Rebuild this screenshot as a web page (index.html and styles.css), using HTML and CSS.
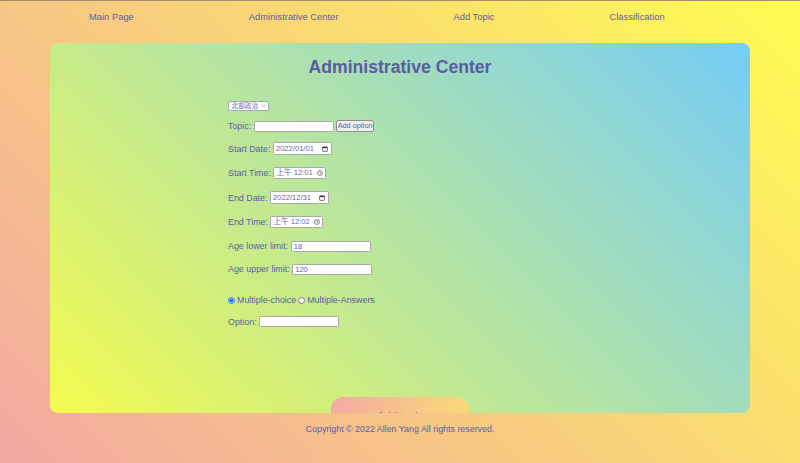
FILE: index.html
```html
<!DOCTYPE html>
<html lang="en">
<head>
<meta charset="utf-8">
<title>Administrative Center</title>
<link rel="stylesheet" href="styles.css">
</head>
<body>
<nav class="nav">
  <a class="nav__link" href="#">Main Page</a>
  <a class="nav__link" href="#">Administrative Center</a>
  <a class="nav__link" href="#">Add Topic</a>
  <a class="nav__link" href="#">Classification</a>
</nav>
<main class="card">
  <h1 class="title">Administrative Center</h1>
  <form class="form">
    <div class="row row--select">
      <span class="select">北部政治<svg class="chev" viewBox="0 0 6 4" width="5" height="3.5"><path d="M0.7 0.8 L3 3 L5.3 0.8" fill="none" stroke="#7a7a7a" stroke-width="0.8"/></svg></span>
    </div>
    <div class="row row--text">
      <span class="label">Topic:</span><input class="input" type="text"><button type="button" class="small-btn">Add option</button>
    </div>
    <div class="row row--date">
      <span class="label">Start Date:</span>
      <span class="field field--date"><span class="field__value">2022/01/01</span><svg class="icon" viewBox="0 0 10 10" width="6" height="6"><rect x="1" y="1.5" width="8" height="7.5" rx="0.8" fill="none" stroke="#333" stroke-width="1.1"/><rect x="1" y="1.5" width="8" height="2" fill="#333"/></svg></span>
    </div>
    <div class="row row--time">
      <span class="label">Start Time:</span>
      <span class="field field--time"><span class="field__value">上午 12:01</span><svg class="icon" viewBox="0 0 10 10" width="6" height="6"><circle cx="5" cy="5" r="4.1" fill="none" stroke="#333" stroke-width="1"/><path d="M5 2.6 V5 L6.8 6.4" fill="none" stroke="#333" stroke-width="1"/></svg></span>
    </div>
    <div class="row row--date">
      <span class="label">End Date:</span>
      <span class="field field--date"><span class="field__value">2022/12/31</span><svg class="icon" viewBox="0 0 10 10" width="6" height="6"><rect x="1" y="1.5" width="8" height="7.5" rx="0.8" fill="none" stroke="#333" stroke-width="1.1"/><rect x="1" y="1.5" width="8" height="2" fill="#333"/></svg></span>
    </div>
    <div class="row row--time">
      <span class="label">End Time:</span>
      <span class="field field--time"><span class="field__value">上午 12:02</span><svg class="icon" viewBox="0 0 10 10" width="6" height="6"><circle cx="5" cy="5" r="4.1" fill="none" stroke="#333" stroke-width="1"/><path d="M5 2.6 V5 L6.8 6.4" fill="none" stroke="#333" stroke-width="1"/></svg></span>
    </div>
    <div class="row row--age">
      <span class="label">Age lower limit:</span><input class="input" type="text" value="18">
    </div>
    <div class="row row--age">
      <span class="label">Age upper limit:</span><input class="input" type="text" value="120">
    </div>
    <div class="row row--radio">
      <input class="radio" type="radio" name="kind" id="k1" checked><label class="label" for="k1">Multiple-choice</label>
      <input class="radio radio--second" type="radio" name="kind" id="k2"><label class="label" for="k2">Multiple-Answers</label>
    </div>
    <div class="row row--option">
      <span class="label">Option:</span><input class="input" type="text">
    </div>
  </form>
  <div class="actions">
    <button type="button" class="submit">Add topic</button>
  </div>
</main>
<footer class="footer">Copyright © 2022 Allen Yang All rights reserved.</footer>
</body>
</html>
```
FILE: styles.css
```css
html, body {
  margin: 0;
  padding: 0;
}

body {
  border-top: 1px solid #a48e6f;
  background: linear-gradient(45deg, #f2a7a3, #fffc52) fixed;
  font-family: "Liberation Sans", Arial, "Noto Sans CJK SC", sans-serif;
  color: #5b5ea6;
  font-size: 8.9px;
}

.nav {
  height: 42px;
  box-sizing: border-box;
  padding: 10px 0 0 89px;
  display: flex;
  gap: 115px;
  font-size: 9.4px;
  line-height: 11px;
}

.nav__link {
  color: #5b5ea6;
  text-decoration: none;
}

.card {
  display: block;
  height: 370px;
  box-sizing: border-box;
  margin: 0 50px;
  padding-top: 14px;
  border-radius: 8px;
  background: linear-gradient(45deg, #f4fb4f, #75ccf7);
}

.title {
  margin: 0;
  text-align: center;
  font-size: 17.6px;
  line-height: 20px;
  font-weight: bold;
  color: #5a5ba2;
}

.form {
  margin: 23.5px 0 0;
  padding-left: 178px;
  display: flex;
  flex-direction: column;
  gap: 10px;
}

.row {
  display: flex;
  align-items: center;
  gap: 2.5px;
  height: 11px;
  line-height: 10px;
}

.row--select { height: 10px; }
.row--date { height: 14px; }
.row--time { height: 15px; }
.row--age { height: 13px; }
.row--radio { height: 10px; margin-top: 9.5px; gap: 0; }
.row--option { height: 13px; }

.label {
  white-space: nowrap;
}

.select {
  display: inline-flex;
  align-items: center;
  justify-content: space-between;
  box-sizing: border-box;
  width: 41px;
  height: 10px;
  padding: 0 2px 0 2.5px;
  border: 1px solid #a8a8a8;
  border-radius: 2px;
  background: #fff;
  font-family: "Noto Sans CJK SC", "Noto Sans CJK JP", sans-serif;
  font-size: 6.7px;
  line-height: 1;
  color: #6b6ea8;
}

.chev {
  display: block;
}

.input {
  box-sizing: border-box;
  width: 80px;
  height: 11px;
  margin: 0;
  padding: 0 2px;
  border: 1px solid #a9a9a9;
  border-radius: 1.5px;
  background: #fff;
  font-family: "Liberation Sans", Arial, sans-serif;
  font-size: 7.6px;
  line-height: 9px;
  color: #5b5ea6;
  outline: none;
}

.small-btn {
  box-sizing: border-box;
  height: 12px;
  margin: 0;
  padding: 0 0.5px;
  border: 1px solid #8f8f8f;
  border-radius: 2px;
  background: #efefef;
  font-family: "Liberation Sans", Arial, sans-serif;
  font-size: 7.3px;
  line-height: 10px;
  color: #5b5ea6;
}

.field {
  display: inline-flex;
  align-items: center;
  justify-content: space-between;
  box-sizing: border-box;
  padding: 0 2.5px 0 2px;
  border: 1px solid #a9a9a9;
  border-radius: 1.5px;
  background: #fff;
  font-family: "Liberation Sans", Arial, "Noto Sans CJK SC", sans-serif;
  font-size: 7.6px;
  line-height: 1;
  color: #65679e;
}

.field--date {
  width: 59px;
  height: 13px;
}

.field--time {
  width: 53px;
  height: 12px;
}

.icon {
  display: block;
  flex: none;
}

.radio {
  width: 7px;
  height: 7px;
  margin: 0 2px 0 0;
  accent-color: #1a73e8;
}

.radio--second {
  margin-left: 2px;
}

.actions {
  margin-top: 69px;
  text-align: center;
}

.submit {
  width: 138px;
  height: 37px;
  margin: 0;
  padding: 0;
  border: none;
  border-radius: 12px;
  background: linear-gradient(to right, #f3aaa2, #fad978);
  font-family: "Liberation Sans", Arial, sans-serif;
  font-size: 11px;
  color: #5b5ea6;
}

.footer {
  position: relative;
  height: 50px;
  box-sizing: border-box;
  padding-top: 11px;
  text-align: center;
  line-height: 10px;
  background: linear-gradient(45deg, #f2a7a3, #fffc52) fixed;
}
```
